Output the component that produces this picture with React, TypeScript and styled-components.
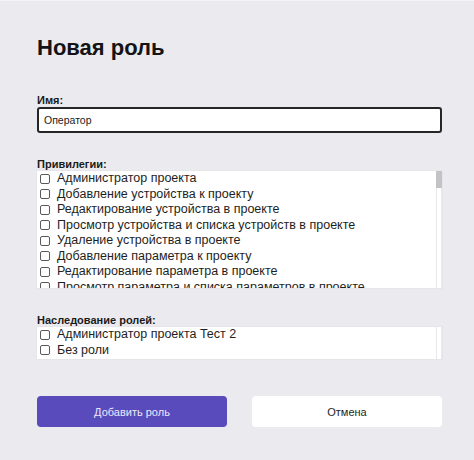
import React from "react";
import styled, { createGlobalStyle } from "styled-components";

const GlobalStyle = createGlobalStyle`
  html, body {
    margin: 0;
    padding: 0;
    background: #ebebef;
  }
  body {
    font-family: "Liberation Sans", Arial, sans-serif;
    color: #1b1b1f;
  }
`;

const Dialog = styled.div`
  width: 474px;
  height: 460px;
  box-sizing: border-box;
  padding: 33px 32px 0 37px;
  display: flex;
  flex-direction: column;
  border-top: 1px solid #f4f4f7;
`;

const Title = styled.h1`
  margin: 0 0 32px;
  font-size: 22px;
  line-height: 28px;
  font-weight: 700;
  color: #141416;
`;

const Label = styled.label`
  display: block;
  font-size: 11px;
  line-height: 13px;
  font-weight: 700;
  color: #1a1a1a;
`;

const Field = styled.div<{ $gap?: number }>`
  display: flex;
  flex-direction: column;
  margin-bottom: ${(p) => p.$gap ?? 0}px;
`;

const TextInput = styled.input`
  height: 26px;
  box-sizing: border-box;
  border: 2px solid #262626;
  border-radius: 3px;
  background: #fff;
  padding: 0 5px;
  font-family: "Liberation Sans", Arial, sans-serif;
  font-size: 10.5px;
  color: #1a1a1a;
  outline: none;
`;

const List = styled.div<{ $height: number }>`
  height: ${(p) => p.$height}px;
  display: flex;
  background: #fff;
  box-shadow: 0 0 0 1px #e6e6ea;
`;

const ListBody = styled.div`
  flex: 1;
  overflow-y: auto;
  padding-left: 3px;
  scrollbar-width: none;
`;

const ScrollTrack = styled.div<{ $gap?: boolean }>`
  flex: none;
  width: 6px;
  margin-left: ${(p) => (p.$gap ? 2 : 0)}px;
  box-sizing: border-box;
  border-left: 1px solid #e8e8ec;
  border-right: 1px solid #e8e8ec;
  background: #fff;
`;

const ScrollThumb = styled.div`
  height: 17px;
  margin: 0 -1px;
  background: #c3c3c6;
`;

const Item = styled.label`
  display: flex;
  align-items: center;
  gap: 7px;
  height: 15.5px;
  line-height: 15.5px;
  font-size: 12.5px;
  color: #1e1e22;
  white-space: nowrap;
`;

const Check = styled.input`
  appearance: none;
  margin: 0;
  flex: none;
  width: 10px;
  height: 10px;
  border: 1px solid #5a5a5e;
  border-radius: 2px;
  background: #fff;
`;

const Actions = styled.div`
  display: flex;
  justify-content: space-between;
  margin-top: 37px;
`;

const Button = styled.button<{ $primary?: boolean }>`
  width: 190px;
  height: 31px;
  border: none;
  border-radius: 4px;
  font-family: "Liberation Sans", Arial, sans-serif;
  font-size: 11px;
  background: ${(p) => (p.$primary ? "#5a4bbd" : "#ffffff")};
  color: ${(p) => (p.$primary ? "#ebe8fa" : "#1f1f22")};
  cursor: pointer;
`;

const entities: [string, string][] = [
  ["устройства", "устройств"],
  ["параметра", "параметров"],
  ["пользователя", "пользователей"],
  ["роли", "ролей"],
  ["скрипта", "скриптов"],
  ["события", "событий"],
  ["отчёта", "отчётов"],
  ["уведомления", "уведомлений"],
  ["шаблона", "шаблонов"],
  ["группы", "групп"],
  ["панели", "панелей"],
  ["графика", "графиков"],
  ["архива", "архивов"],
];

const privileges = [
  "Администратор проекта",
  ...entities.flatMap(([one, many]) => [
    `Добавление ${one} к проекту`,
    `Редактирование ${one} в проекте`,
    `Просмотр ${one} и списка ${many} в проекте`,
    `Удаление ${one} в проекте`,
  ]),
];

const parentRoles = ["Администратор проекта Тест 2", "Без роли"];

const App = () => {
  const [name, setName] = React.useState("Оператор");

  return (
    <>
      <GlobalStyle />
      <Dialog>
        <Title>Новая роль</Title>
        <Field $gap={25}>
          <Label>Имя:</Label>
          <TextInput value={name} onChange={(e) => setName(e.target.value)} />
        </Field>
        <Field $gap={26}>
          <Label>Привилегии:</Label>
          <List $height={117}>
            <ListBody>
              {privileges.map((p) => (
                <Item key={p}>
                  <Check type="checkbox" />
                  {p}
                </Item>
              ))}
            </ListBody>
            <ScrollTrack>
              <ScrollThumb />
            </ScrollTrack>
          </List>
        </Field>
        <Field>
          <Label>Наследование ролей:</Label>
          <List $height={32}>
            <ListBody>
              {parentRoles.map((r) => (
                <Item key={r}>
                  <Check type="checkbox" />
                  {r}
                </Item>
              ))}
            </ListBody>
            <ScrollTrack $gap />
          </List>
        </Field>
        <Actions>
          <Button $primary>Добавить роль</Button>
          <Button>Отмена</Button>
        </Actions>
      </Dialog>
    </>
  );
};

export default App;
